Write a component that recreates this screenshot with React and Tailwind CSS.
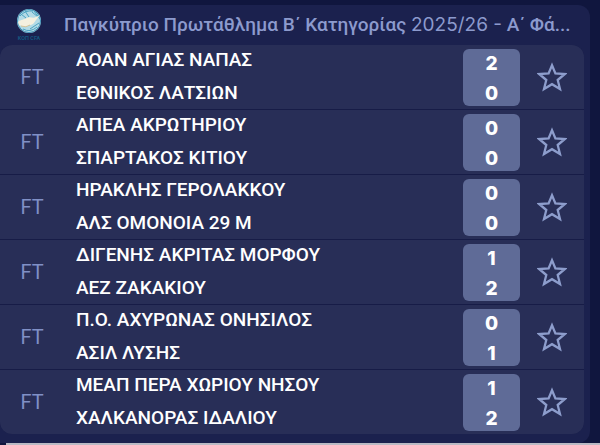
import React, { useState } from 'react';

const MATCHES = [
    { id: 1, status: 'FT', home: 'ΑΟΑΝ ΑΓΙΑΣ ΝΑΠΑΣ', away: 'ΕΘΝΙΚΟΣ ΛΑΤΣΙΩΝ', score: [2, 0] },
    { id: 2, status: 'FT', home: 'ΑΠΕΑ ΑΚΡΩΤΗΡΙΟΥ', away: 'ΣΠΑΡΤΑΚΟΣ ΚΙΤΙΟΥ', score: [0, 0] },
    { id: 3, status: 'FT', home: 'ΗΡΑΚΛΗΣ ΓΕΡΟΛΑΚΚΟΥ', away: 'ΑΛΣ ΟΜΟΝΟΙΑ 29 Μ', score: [0, 0] },
    { id: 4, status: 'FT', home: 'ΔΙΓΕΝΗΣ ΑΚΡΙΤΑΣ ΜΟΡΦΟΥ', away: 'ΑΕΖ ΖΑΚΑΚΙΟΥ', score: [1, 2] },
    { id: 5, status: 'FT', home: 'Π.Ο. ΑΧΥΡΩΝΑΣ ΟΝΗΣΙΛΟΣ', away: 'ΑΣΙΛ ΛΥΣΗΣ', score: [0, 1] },
    { id: 6, status: 'FT', home: 'ΜΕΑΠ ΠΕΡΑ ΧΩΡΙΟΥ ΝΗΣΟΥ', away: 'ΧΑΛΚΑΝΟΡΑΣ ΙΔΑΛΙΟΥ', score: [1, 2] },
];

const LeagueLogo = () => (
    <svg viewBox="0 0 26 34" className="w-[26px] h-[34px] flex-shrink-0" aria-hidden="true">
        <circle cx="13" cy="13" r="12" fill="#b4dbe6" />
        <circle cx="13" cy="13" r="11.5" fill="none" stroke="#3c8fb4" />
        <path d="M4 8 Q9 2 17 3 M7 21 Q14 25 21 19 M16 4 L22 9 M18 3 L24 11 M14 21 L23 15 M5 6 L10 10 M9 3 L13 9" fill="none" stroke="#4aa3c2" strokeWidth="1" />
        <path d="M2 14 C5 11 8 12 11 10 C14 8 17 11 20 9 L24 7 L20 12 C18 15 17 17 13 17 C10 20 6 18 3 17 Z" fill="#f4f0df" />
        <path d="M5 18 Q10 20 14 17" fill="none" stroke="#d9b878" strokeWidth="0.7" />
        <text x="13" y="32" textAnchor="middle" fontSize="5.5" fontWeight="700" fill="#14567f" fontFamily="Roboto, sans-serif">ΚΟΠ CFA</text>
    </svg>
);

const FavoriteButton = ({ label }) => {
    const [active, setActive] = useState(false);

    return (
        <button
            type="button"
            aria-label={label}
            aria-pressed={active}
            onClick={() => setActive(prev => !prev)}
            className="w-16 flex-shrink-0 flex items-center justify-center text-[#8d9dcc]"
        >
            <svg viewBox="0 0 30 30" className="w-[30px] h-[30px]" fill={active ? 'currentColor' : 'none'}>
                <path
                    d="M15 3.2 L18.4 11.4 L27.8 12 L20.7 18 L23 27 L15 22.2 L7 27 L9.3 18 L2.2 12 L11.6 11.4 Z"
                    stroke="currentColor"
                    strokeWidth="2.3"
                />
            </svg>
        </button>
    );
};

const MatchRow = ({ match }) => (
    <li className="h-16 flex items-stretch bg-[#282e57]">
        <span className="w-16 flex-shrink-0 flex items-center justify-center text-xl text-[#8090c6]">
            {match.status}
        </span>
        <div className="flex-1 min-w-0 pl-3 pb-0.5 flex flex-col justify-center text-[19px] leading-[33px] font-medium text-white">
            <span className="flex-shrink-0 truncate">{match.home}</span>
            <span className="flex-shrink-0 truncate">{match.away}</span>
        </div>
        <div className="w-[57px] flex-shrink-0 mt-1 mb-[3px] pt-0.5 rounded-md bg-[#5f6b97] flex flex-col items-center justify-center font-['Inter',sans-serif] text-[19px] leading-[30px] font-extrabold text-white">
            <span>{match.score[0]}</span>
            <span>{match.score[1]}</span>
        </div>
        <FavoriteButton label={`${match.home} - ${match.away}`} />
    </li>
);

const App = () => (
    <div className="min-h-screen flex flex-col bg-[#10163e] font-['Roboto',sans-serif]">
        <section className="flex-1 mt-[5px] mr-2.5 pr-1.5 pb-2 rounded-r-xl bg-[#1b214e]">
            <header className="h-10 pl-4 flex items-center">
                <LeagueLogo />
                <h1 className="flex-1 min-w-0 ml-[22px] text-[19px] font-medium text-[#8c9acd] truncate">
                    Παγκύπριο Πρωτάθλημα Β΄ Κατηγορίας{' '}
                    <span className="font-['Inter',sans-serif] font-normal">2025/26 -</span> Α΄ Φά...
                </h1>
            </header>
            <ul className="flex flex-col gap-px rounded-xl overflow-hidden bg-[#171c47]">
                {MATCHES.map(match => <MatchRow key={match.id} match={match} />)}
            </ul>
        </section>
        <div className="h-0.5 ml-1.5 bg-[#b9bac4]" />
    </div>
);

export default App;
